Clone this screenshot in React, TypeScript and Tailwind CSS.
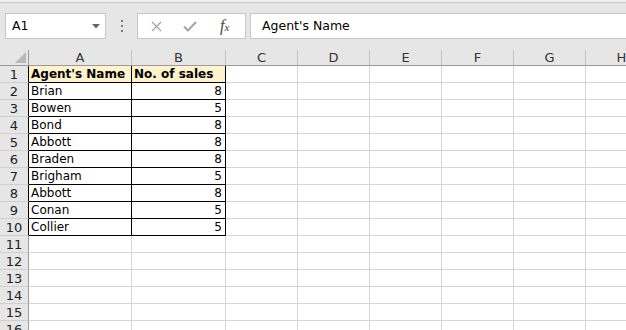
import React from "react";

const font = { fontFamily: '"DejaVu Sans", Verdana, sans-serif' };

const colWidths = ["w-[29px]", "w-[103px]", "w-[94px]", "w-[72px]", "w-[72px]", "w-[72px]", "w-[72px]", "w-[72px]", "w-[72px]"];
const letters = ["A", "B", "C", "D", "E", "F", "G", "H"];

const data: [string, string][] = [
  ["Agent's Name", "No. of sales"],
  ["Brian", "8"],
  ["Bowen", "5"],
  ["Bond", "8"],
  ["Abbott", "8"],
  ["Braden", "8"],
  ["Brigham", "5"],
  ["Abbott", "8"],
  ["Conan", "5"],
  ["Collier", "5"],
];

export default function App() {
  const rows = Array.from({ length: 16 }, (_, i) => i + 1);
  return (
    <div className="w-[626px] h-[330px] overflow-hidden bg-[#e6e6e6] text-black" style={font}>
      {/* top strip */}
      <div className="h-[3px] bg-[#f0f0f0] border-b border-[#c8c8c8]" />
      {/* formula bar */}
      <div className="h-[47px] flex items-start pt-[10px]">
        <div className="ml-[5px] w-[101px] h-[26px] bg-white border border-[#c6c6c6] flex items-center justify-between pl-[6px] pr-[5px]">
          <span className="text-[12.5px]">A1</span>
          <svg width="8" height="5" viewBox="0 0 8 5">
            <path d="M0 0 H8 L4 4.5 Z" fill="#666" />
          </svg>
        </div>
        <div className="w-[31px] h-[26px] flex flex-col items-center justify-center gap-[3px]">
          <div className="w-[2px] h-[2px] bg-[#7a7a7a]" />
          <div className="w-[2px] h-[2px] bg-[#7a7a7a]" />
          <div className="w-[2px] h-[2px] bg-[#7a7a7a]" />
        </div>
        <div className="w-[109px] h-[26px] bg-white border border-[#c6c6c6] flex items-center">
          <svg className="ml-[13px]" width="11" height="11" viewBox="0 0 11 11">
            <path d="M1 1 L10 10 M10 1 L1 10" stroke="#a6a6a6" strokeWidth="1.3" />
          </svg>
          <svg className="ml-[21px]" width="14" height="11" viewBox="0 0 14 11">
            <path d="M1 5.5 L5 9.5 L13 1" stroke="#a6a6a6" strokeWidth="2" fill="none" />
          </svg>
          <span className="ml-[23px] italic text-[16px] text-[#444] leading-none" style={{ fontFamily: '"Liberation Serif", serif' }}>
            f<span className="text-[11px]">x</span>
          </span>
        </div>
        <div className="ml-[4px] flex-1 h-[26px] bg-white border border-[#c6c6c6] border-r-0 flex items-center pl-[11px]">
          <span className="text-[12.5px]">Agent's Name</span>
        </div>
      </div>
      {/* column headers */}
      <div className="flex h-[16px] border-b border-[#9b9b9b]">
        <div className={`${colWidths[0]} shrink-0 relative border-r border-[#9b9b9b]`}>
          <svg className="absolute right-[2px] bottom-[2px]" width="11" height="11" viewBox="0 0 11 11">
            <path d="M11 0 V11 H0 Z" fill="#b8b8b8" />
          </svg>
        </div>
        {letters.map((l, i) => (
          <div
            key={l}
            className={`${colWidths[i + 1]} shrink-0 flex items-center justify-center text-[13px] text-[#333] leading-none border-r border-[#c4c4c4]`}
          >
            {l}
          </div>
        ))}
      </div>
      {/* rows */}
      <div className="bg-white">
        {rows.map((r) => {
          const inTable = r <= 10;
          const d = inTable ? data[r - 1] : null;
          return (
            <div key={r} className="flex h-[17px]">
              <div
                className={`${colWidths[0]} shrink-0 bg-[#e6e6e6] border-b border-[#cfcfcf] border-r ${inTable ? "border-r-black" : "border-r-[#9b9b9b]"} flex items-center justify-center text-[13px] text-[#222] leading-none`}
              >
                {r}
              </div>
              {letters.map((l, i) => {
                const tableCell = inTable && i < 2;
                const border = tableCell ? "border-black" : "border-[#d4d4d4]";
                const bg = r === 1 && i < 2 ? "bg-[#fff2cc]" : "bg-white";
                const text = tableCell && d ? d[i] : "";
                return (
                  <div
                    key={l}
                    className={`${colWidths[i + 1]} shrink-0 ${bg} border-b border-r ${border} flex items-center text-[12px] leading-none overflow-hidden whitespace-nowrap ${i === 1 ? "justify-end pr-[3px]" : "pl-[2px]"} ${r === 1 ? "font-bold" : ""}`}
                  >
                    {r === 1 && i === 1 ? <span className="pl-[2px] w-full">{text}</span> : text}
                  </div>
                );
              })}
            </div>
          );
        })}
      </div>
    </div>
  );
}
